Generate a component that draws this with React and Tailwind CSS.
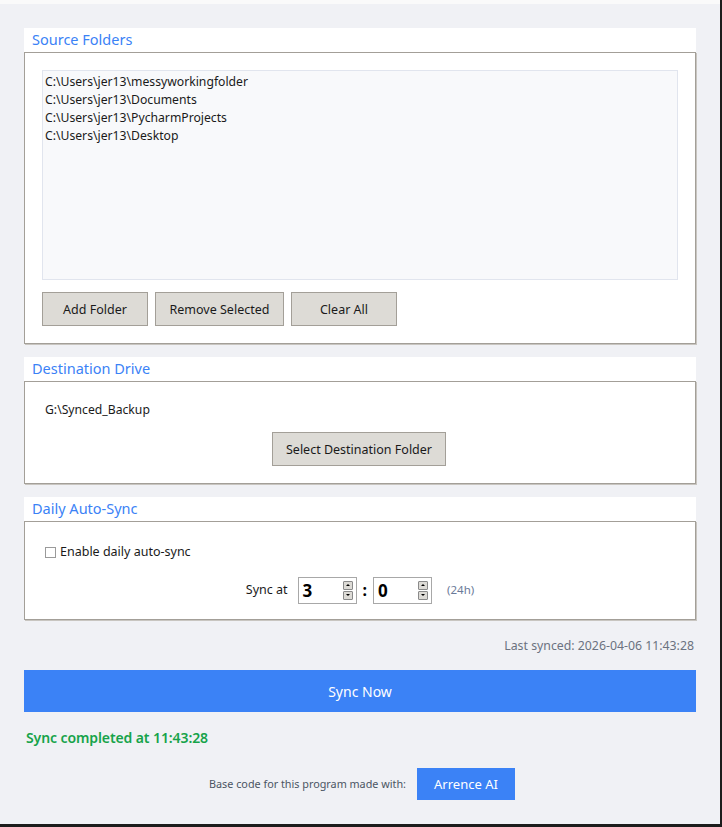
import { useState } from 'react';

const font = { fontFamily: '"Noto Sans", "Open Sans", sans-serif' };

function Frame({ title, children, className }) {
    return (
        <div className="flex flex-col">
            <div className="h-[24px] bg-white flex items-center pl-2 pb-[2px] text-[14.5px] text-[#3b82f6] leading-none">{title}</div>
            <div className={"bg-white border border-[#a39f98] shadow-[1px_1px_0_#c8c5c0] " + className}>{children}</div>
        </div>
    );
}

function GrayButton({ children, className }) {
    return (
        <button className={"h-[34px] pt-[2px] bg-[#dddbd6] border border-[#a39f98] text-[12.5px] text-[#1a1a1a] " + className}>
            {children}
        </button>
    );
}

function Spin({ value }) {
    return (
        <div className="w-[59px] h-[27px] bg-white border border-[#a8a8a8] flex items-center justify-between pl-[4px] pr-[3px]">
            <span className="text-[17px] font-bold text-black leading-none">{value}</span>
            <div className="flex flex-col gap-[1px]">
                <div className="w-[10px] h-[9px] bg-[#dddbd6] border border-[#8a8a8a] rounded-[1px] flex items-center justify-center">
                    <div className="w-0 h-0 border-l-[2px] border-r-[2px] border-b-[2px] border-l-transparent border-r-transparent border-b-black" />
                </div>
                <div className="w-[10px] h-[9px] bg-[#dddbd6] border border-[#8a8a8a] rounded-[1px] flex items-center justify-center">
                    <div className="w-0 h-0 border-l-[2px] border-r-[2px] border-t-[2px] border-l-transparent border-r-transparent border-t-black" />
                </div>
            </div>
        </div>
    );
}

export default function App() {
    const [checked, setChecked] = useState(false)
    const folders = [
        'C:\\Users\\jer13\\messyworkingfolder',
        'C:\\Users\\jer13\\Documents',
        'C:\\Users\\jer13\\PycharmProjects',
        'C:\\Users\\jer13\\Desktop',
    ]
    return (
        <div className="w-[722px] h-[827px] bg-[#1c1c1c] flex" style={font}>
            <div className="w-[720px] h-[824px] bg-[#f0f1f5] border-t-4 border-[#fafafa] flex flex-col px-6 pt-6">
                <Frame title="Source Folders" className="h-[292px] px-[17px] pt-[17px]">
                    <div className="h-[210px] bg-[#f8f9fb] border border-[#e1e5ee] pt-[2px] pl-[2px] flex flex-col">
                        {folders.map((f, i) => (
                            <div key={i} className="h-[18px] flex items-center text-[12.2px] text-[#1a1a1a]">{f}</div>
                        ))}
                    </div>
                    <div className="flex gap-[7px] mt-[12px]">
                        <GrayButton className="w-[106px]">Add Folder</GrayButton>
                        <GrayButton className="w-[129px]">Remove Selected</GrayButton>
                        <GrayButton className="w-[106px]">Clear All</GrayButton>
                    </div>
                </Frame>

                <div className="mt-[13px]">
                    <Frame title="Destination Drive" className="h-[103px] flex flex-col">
                        <div className="text-[12.2px] text-[#1a1a1a] pl-[20px] pt-[22px] leading-none">G:\Synced_Backup</div>
                        <div className="flex justify-center mt-[16px] pr-[2px]">
                            <GrayButton className="w-[174px]">Select Destination Folder</GrayButton>
                        </div>
                    </Frame>
                </div>

                <div className="mt-[13px]">
                    <Frame title="Daily Auto-Sync" className="h-[99px] flex flex-col">
                        <label className="flex items-center gap-[4px] pl-[20px] pt-[24px] text-[12.5px] text-[#1a1a1a] leading-none">
                            <span
                                onClick={() => setChecked(!checked)}
                                className="w-[11px] h-[11px] border border-[#9a9a9a] bg-white inline-block"
                            />
                            Enable daily auto-sync
                        </label>
                        <div className="flex items-center justify-center mt-[18px]">
                            <span className="text-[12.5px] text-[#1a1a1a] mr-[10px]">Sync at</span>
                            <Spin value="3" />
                            <span className="text-[16px] font-bold text-black mx-[6px]">:</span>
                            <Spin value="0" />
                            <span className="text-[11.5px] text-[#6b7a99] ml-[15px]">(24h)</span>
                        </div>
                    </Frame>
                </div>

                <div className="text-right text-[12.3px] text-[#6b7280] mt-[20px] pr-[2px] leading-none">Last synced: 2026-04-06 11:43:28</div>

                <button className="mt-[18px] h-[42px] w-full bg-[#3b82f6] text-white text-[14px]">Sync Now</button>

                <div className="mt-[19px] pl-[2px] text-[14px] font-semibold text-[#16a34a] leading-none tracking-[-0.1px]">Sync completed at 11:43:28</div>

                <div className="flex items-center justify-center gap-[11px] mt-[23px] pl-[4px]">
                    <span className="text-[10.8px] text-[#4b5563]">Base code for this program made with:</span>
                    <button className="w-[98px] h-[32px] bg-[#3b82f6] text-white text-[13px]">Arrence AI</button>
                </div>
            </div>
        </div>
    );
}
